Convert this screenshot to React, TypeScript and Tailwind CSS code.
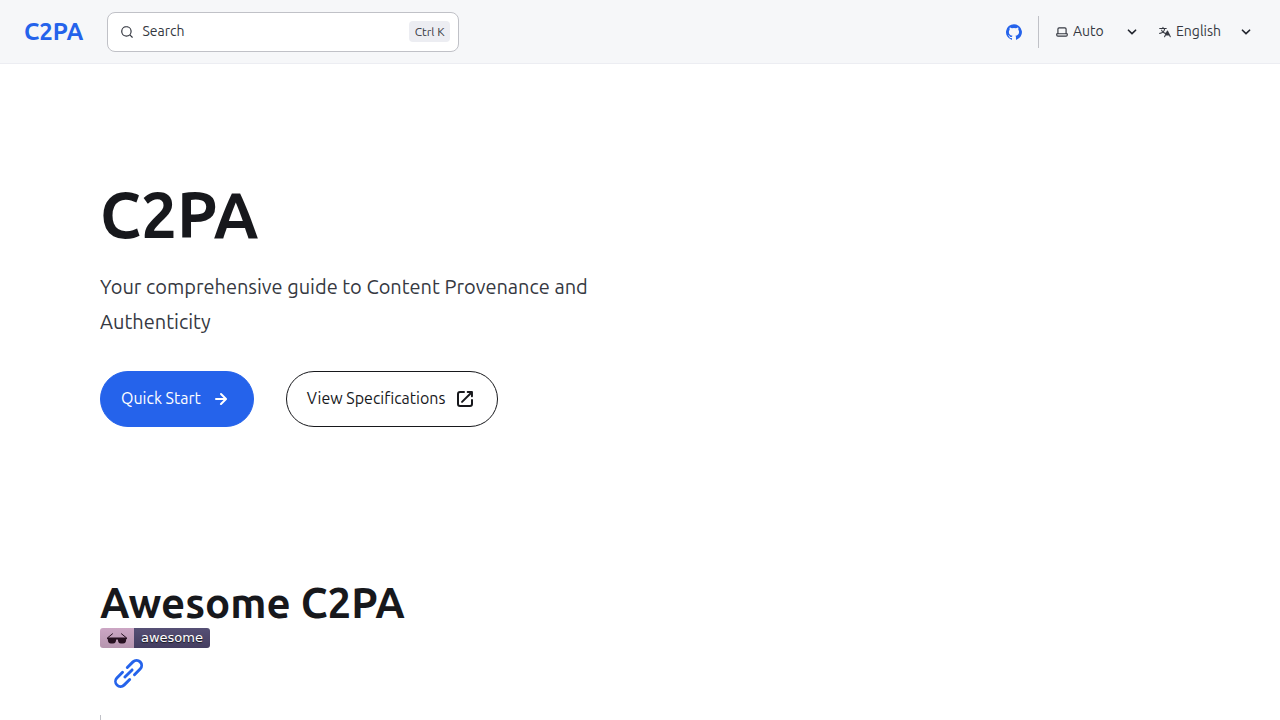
import React from 'react';

interface IconProps {
  d: string;
  className: string;
}

const icons = {
  search: 'M21.71 20.29 18 16.61A9 9 0 1 0 16.61 18l3.68 3.68a.999.999 0 0 0 1.42 0 1 1 0 0 0 0-1.39ZM11 18a7 7 0 1 1 0-14 7 7 0 0 1 0 14Z',
  github: 'M12 .3a12 12 0 0 0-3.8 23.38c.6.12.83-.26.83-.57L9 21.07c-3.34.72-4.04-1.61-4.04-1.61-.55-1.39-1.34-1.76-1.34-1.76-1.08-.74.09-.73.09-.73 1.2.09 1.83 1.24 1.83 1.24 1.08 1.83 2.81 1.3 3.5 1 .1-.78.42-1.31.76-1.61-2.67-.3-5.47-1.33-5.47-5.93 0-1.31.47-2.38 1.24-3.22-.14-.3-.54-1.52.1-3.18 0 0 1-.32 3.3 1.23a11.5 11.5 0 0 1 6 0c2.28-1.55 3.29-1.23 3.29-1.23.64 1.66.24 2.88.12 3.18a4.65 4.65 0 0 1 1.23 3.22c0 4.61-2.8 5.63-5.48 5.92.42.36.81 1.1.81 2.22l-.01 3.29c0 .31.2.69.82.57A12 12 0 0 0 12 .3Z',
  laptop: 'M21 14h-1V7a3 3 0 0 0-3-3H7a3 3 0 0 0-3 3v7H3a1 1 0 0 0-1 1v2a3 3 0 0 0 3 3h14a3 3 0 0 0 3-3v-2a1 1 0 0 0-1-1ZM6 7a1 1 0 0 1 1-1h10a1 1 0 0 1 1 1v7H6V7Zm14 10a1 1 0 0 1-1 1H5a1 1 0 0 1-1-1v-1h16v1Z',
  translate: 'M8.516 3a.94.94 0 0 0-.941.94v1.15H2.94a.94.94 0 1 0 0 1.882h7.362a7.422 7.422 0 0 1-1.787 3.958 7.42 7.42 0 0 1-1.422-2.425.94.94 0 1 0-1.774.627 9.303 9.303 0 0 0 1.785 3.043 7.422 7.422 0 0 1-4.164 1.278.94.94 0 1 0 0 1.881 9.303 9.303 0 0 0 5.575-1.855 9.303 9.303 0 0 0 4.11 1.74l-.763 1.525a.968.968 0 0 0-.016.034l-1.385 2.77a.94.94 0 1 0 1.683.841l1.133-2.267h5.806l1.134 2.267a.94.94 0 0 0 1.683-.841l-1.385-2.769a.95.95 0 0 0-.018-.036l-3.476-6.951a.94.94 0 0 0-1.682 0l-1.82 3.639a7.423 7.423 0 0 1-3.593-1.256 9.303 9.303 0 0 0 2.27-5.203h1.894a.94.94 0 0 0 0-1.881H9.456V3.94A.94.94 0 0 0 8.516 3Zm6.426 11.794a1.068 1.068 0 0 1-.02.039l-.703 1.407h3.924l-1.962-3.924-1.24 2.478Z',
  caret: 'M17 9.17a1 1 0 0 0-1.41 0L12 12.71 8.46 9.17a1 1 0 1 0-1.41 1.42l4.24 4.24a1.002 1.002 0 0 0 1.42 0L17 10.59a1.002 1.002 0 0 0 0-1.42Z',
  arrow: 'M17.92 11.62a1.001 1.001 0 0 0-.21-.33l-5-5a1.003 1.003 0 1 0-1.42 1.42l3.3 3.29H7a1 1 0 0 0 0 2h7.59l-3.3 3.29a1.002 1.002 0 0 0 .325 1.639 1 1 0 0 0 1.095-.219l5-5a1 1 0 0 0 .21-.33 1 1 0 0 0 0-.76Z',
  external: 'M19.33 10.18a1 1 0 0 1-.77 0 1 1 0 0 1-.62-.93l.01-1.83-8.2 8.2a1 1 0 0 1-1.41-1.42l8.2-8.2H14.7a1 1 0 0 1 0-2h4.25a1 1 0 0 1 1 1v4.25a1 1 0 0 1-.62.93ZM11 4a1 1 0 1 1 0 2H7a1 1 0 0 0-1 1v10a1 1 0 0 0 1 1h10a1 1 0 0 0 1-1v-4a1 1 0 1 1 2 0v4a3 3 0 0 1-3 3H7a3 3 0 0 1-3-3V7a3 3 0 0 1 3-3h4Z',
  link: 'm12.11 15.39-3.88 3.88a2.52 2.52 0 0 1-3.5 0 2.47 2.47 0 0 1 0-3.5l3.88-3.88a1 1 0 0 0-1.42-1.42l-3.88 3.89a4.48 4.48 0 0 0 6.33 6.33l3.89-3.88a1 1 0 1 0-1.42-1.42Zm8.58-12.08a4.49 4.49 0 0 0-6.33 0l-3.89 3.88a1 1 0 0 0 1.42 1.42l3.88-3.88a2.52 2.52 0 0 1 3.5 0 2.47 2.47 0 0 1 0 3.5l-3.88 3.88a1 1 0 1 0 1.42 1.42l3.88-3.89a4.49 4.49 0 0 0 0-6.33ZM8.83 15.17a1 1 0 0 0 1.1.22 1 1 0 0 0 .32-.22l4.92-4.92a1 1 0 0 0-1.42-1.42l-4.92 4.92a1 1 0 0 0 0 1.42Z',
};

function Icon({ d, className }: IconProps) {
  return (
    <svg viewBox="0 0 24 24" fill="currentColor" aria-hidden="true" className={`shrink-0 ${className}`}>
      <path d={d} />
    </svg>
  );
}

interface HeaderSelectProps {
  label: string;
  icon: string;
  options: string[];
  className: string;
}

function HeaderSelect({ label, icon, options, className }: HeaderSelectProps) {
  return (
    <label className="flex items-center gap-1 text-[#353841]">
      <Icon d={icon} className="size-3.5" />
      <select
        aria-label={label}
        className={`appearance-none bg-transparent pb-0.5 text-sm leading-5 ${className}`}
      >
        {options.map(option => (
          <option key={option}>{option}</option>
        ))}
      </select>
      <Icon d={icons.caret} className="size-5 text-[#23262f]" />
    </label>
  );
}

function Header() {
  return (
    <header className="flex h-16 items-center border-b border-[#ecedf2] bg-[#f6f7f9] px-6">
      <a href="#" className="mr-6 text-2xl leading-7 font-semibold text-[#2563eb]">C2PA</a>
      <button
        type="button"
        className="flex h-10 w-88 items-center gap-2 rounded-lg border border-[#c0c1c7] bg-white pr-2 pl-3 text-sm text-[#353841]"
      >
        <Icon d={icons.search} className="size-3.5" />
        <span className="pb-0.5">Search</span>
        <kbd className="ml-auto rounded bg-[#ecedf2] px-1.5 py-0.5 font-[inherit] text-xs leading-[17px]">Ctrl K</kbd>
      </button>
      <div className="ml-auto flex items-center gap-4">
        <a href="#" aria-label="GitHub" className="text-[#2563eb]">
          <Icon d={icons.github} className="size-4" />
        </a>
        <div className="flex h-8 items-center gap-4 border-l border-[#c0c1c7] pl-4">
          <HeaderSelect label="Select theme" icon={icons.laptop} options={['Auto']} className="w-[45px]" />
          <HeaderSelect label="Select language" icon={icons.translate} options={['English']} className="w-14" />
        </div>
      </div>
    </header>
  );
}

function AwesomeBadge() {
  return (
    <a href="#" className="flex h-5 w-[110px] overflow-hidden rounded-[3px]">
      <span className="flex w-[34px] items-center justify-center bg-linear-to-b from-[#cca6c4] to-[#b595ae]">
        <svg viewBox="0 0 20 11" className="h-[11px] w-5" aria-hidden="true">
          <path
            d="M0 4.500h20v1.200l-.8.600c-.1 2.900-1 4.200-3.200 4.200h-2c-2.200 0-2.900-1.400-3.200-3.900H9.200c-.3 2.500-1 3.900-3.200 3.900H4C1.800 10.500.900 9.200.800 6.300L0 5.700Z"
            fill="#261120"
          />
          <path d="M1 4.500 5.500.800M19 4.500 14.500.800" stroke="#261120" strokeWidth="1" strokeLinecap="round" />
        </svg>
      </span>
      <span className="flex flex-1 items-center justify-center bg-linear-to-b from-[#565075] to-[#443d60] font-['DejaVu_Sans',sans-serif] text-[13px] leading-4 text-white text-shadow-[0_1px_1px_#17181c]">
        awesome
      </span>
    </a>
  );
}

export default function App() {
  return (
    <div className="min-h-screen bg-white font-['Ubuntu','Noto_Sans',sans-serif] text-[#17181c]">
      <Header />
      <main className="px-25">
        <section className="pt-[115px]">
          <h1 className="text-[64px] leading-[70px] font-semibold">C2PA</h1>
          <p className="mt-5 max-w-[550px] text-xl leading-[35px] text-[#353841]">
            Your comprehensive guide to Content Provenance and Authenticity
          </p>
          <div className="mt-8 flex flex-wrap gap-8">
            <a href="#" className="flex h-14 items-center gap-2 rounded-full border border-[#2563eb] bg-[#2563eb] px-5 text-white">
              <span className="pb-0.5">Quick Start</span>
              <Icon d={icons.arrow} className="size-6" />
            </a>
            <a href="#" className="flex h-14 items-center gap-2 rounded-full border border-[#17181c] px-5">
              <span className="pb-0.5">View Specifications</span>
              <Icon d={icons.external} className="size-6" />
            </a>
          </div>
        </section>
        <section className="mt-[151px]">
          <h2 className="text-[42px] leading-[50px] font-semibold">Awesome C2PA</h2>
          <AwesomeBadge />
          <a href="#" aria-label="Section titled Awesome C2PA" className="mt-2 ml-[11px] block w-fit text-[#2563eb]">
            <Icon d={icons.link} className="size-[35px]" />
          </a>
          <blockquote className="mt-6 border-l border-[#c0c1c7] pl-4">
            <p className="h-14" />
          </blockquote>
        </section>
      </main>
    </div>
  );
}
